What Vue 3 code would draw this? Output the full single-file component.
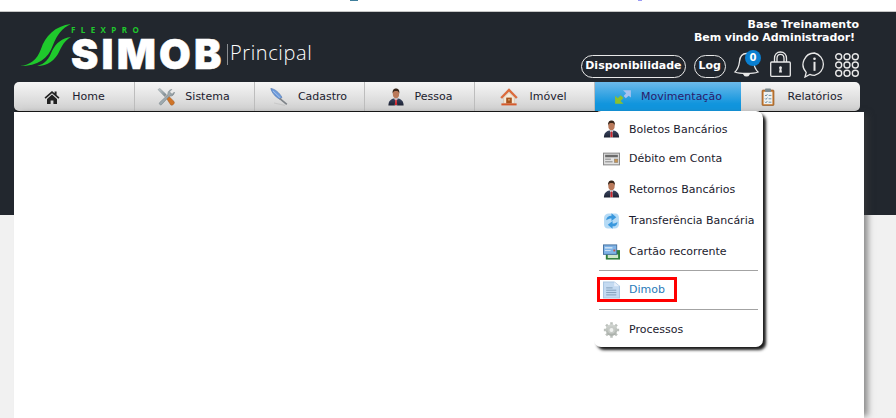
<script setup>
const navItems = [
  { label: 'Home', icon: 'home', width: 121, iconGap: 11, pad: 0 },
  { label: 'Sistema', icon: 'tools', width: 120, iconGap: 10, pad: 2 },
  { label: 'Cadastro', icon: 'quill', width: 110, iconGap: 10, pad: 2 },
  { label: 'Pessoa', icon: 'man', width: 110, iconGap: 10, pad: 0 },
  { label: 'Imóvel', icon: 'house', width: 120, iconGap: 11, pad: 2 },
  { label: 'Movimentação', icon: 'move', width: 146, iconGap: 9, pad: 0 },
  { label: 'Relatórios', icon: 'clip', width: 119, iconGap: 11, pad: 0 }
].map((item) => ({ ...item, active: item.label === 'Movimentação' }))
const menu = [
  { label: 'Boletos Bancários', icon: 'man', h: 30 },
  { label: 'Débito em Conta', icon: 'debit', h: 29 },
  { label: 'Retornos Bancários', icon: 'man', h: 32 },
  { label: 'Transferência Bancária', icon: 'transfer', h: 31 },
  { label: 'Cartão recorrente', icon: 'card', h: 31 },
  { sep: true },
  { label: 'Dimob', icon: 'doc', h: 25, marked: true },
  { sep: true },
  { label: 'Processos', icon: 'gear', h: 31 }
]
</script>

<template>
  <div class="page">
    <svg class="defs" width="0" height="0" aria-hidden="true">
      <defs>
        <linearGradient id="g-steel" x1="0" y1="0" x2="1" y2="1">
          <stop offset="0" stop-color="#c4ced2"/><stop offset="1" stop-color="#77848a"/>
        </linearGradient>
        <linearGradient id="g-suit" x1="0" y1="0" x2="0" y2="1">
          <stop offset="0" stop-color="#3a4560"/><stop offset="1" stop-color="#1d2233"/>
        </linearGradient>
        <linearGradient id="g-gear" x1="0" y1="0" x2="0" y2="1">
          <stop offset="0" stop-color="#d4d8d4"/><stop offset="1" stop-color="#a6aca6"/>
        </linearGradient>
        <symbol id="i-home" viewBox="-1 -1 18 18">
          <path d="M8 2 0.5 8.6 1.6 9.8 8 4.2 14.4 9.8 15.5 8.6 12.6 6V2.6H10.6V4.2Z" fill="#222"/>
          <path d="M3 10 8 5.6 13 10V15H9.4V11.4H6.6V15H3Z" fill="#222"/>
        </symbol>
        <symbol id="i-tools" viewBox="0 0 18 18">
          <path d="M1 1.6 2.8.4 9.4 6.6 7.6 8.6Z" fill="url(#g-steel)" stroke="#6f7b80" stroke-width=".4"/>
          <path d="M8.6 9 10.6 7 17 13.4C17.8 14.4 17.2 15.6 16.4 16.4 15.6 17.2 14.4 17.6 13.6 16.8Z" fill="#cf7428" stroke="#8a4a18" stroke-width=".4"/>
          <path d="M2.6 14.6 11 6.6C10.6 4.6 11.4 2 14.8 1.4L12.8 3.6 13.6 5.6 15.6 6 17.4 4C17.4 6.6 15.4 8.6 12.6 8L4.6 16.6C3.4 17.6 1.6 16 2.6 14.6Z" fill="url(#g-steel)" stroke="#6f7b80" stroke-width=".5"/>
        </symbol>
        <symbol id="i-quill" viewBox="0 0 18 18">
          <path d="M.8.4C5 1 9.4 4.6 12 9.4L9.8 11.2C5.6 9 1.8 5 .8.4Z" fill="#6d9bdc" stroke="#44699f" stroke-width=".5"/>
          <path d="M3 3 10.4 10" stroke="#c9d9ee" stroke-width=".6" fill="none"/>
          <path d="M9.6 10.4 16.8 16.4" stroke="#7e8388" stroke-width="1.7" fill="none"/>
          <path d="M4 15 15 17.4" stroke="#c9c9c9" stroke-width="1.1" fill="none"/>
        </symbol>
        <symbol id="i-man" viewBox="0 0 16 18">
          <path d="M.4 17.6C.4 13 2.6 11.2 5.8 10.4H10.2C13.4 11.2 15.6 13 15.6 17.6Z" fill="url(#g-suit)"/>
          <path d="M6.2 10.4H9.8L8.8 12.6 9.2 17.6H6.8L7.2 12.6Z" fill="#f4f4f4"/>
          <path d="M7.3 11.4H8.7L9 16.2 8 17.6 7 16.2Z" fill="#d1242c"/>
          <ellipse cx="8" cy="5.6" rx="3.2" ry="4.7" fill="#b9795a"/>
          <path d="M4.7 5.4C4.2 1.8 6.2.6 8 .6 9.8.6 11.8 1.8 11.3 5.4 10.8 3.6 9.8 3 8 3 6.2 3 5.2 3.6 4.7 5.4Z" fill="#38261a"/>
        </symbol>
        <symbol id="i-house" viewBox="0 0 18 18">
          <path d="M9 .6.6 9.2 2 10.6 9 3.4 16 10.6 17.4 9.2Z" fill="#e06a38" stroke="#b94c20" stroke-width=".3"/>
          <path d="M3.6 9.8 9 4.4 14.4 9.8V15.4H3.6Z" fill="#f6ead8" stroke="#cdb79c" stroke-width=".5"/>
          <rect x="6.2" y="9.6" width="5.6" height="5.8" fill="#a6531d"/>
          <rect x="8.4" y="11" width="1.2" height="1.6" fill="#e9b984"/>
          <rect x="1.4" y="15.4" width="15.2" height="2" fill="#d65a2c"/>
        </symbol>
        <symbol id="i-move" viewBox="0 0 16 14">
          <path d="M8 1H15V7.5L13 5.8 10.5 8 8.6 6 10.8 3.6Z" fill="#a8c2f0"/>
          <path d="M8.5 13H1V5.8L3.4 8 6 5.4 8.4 7.8 5.8 10.5Z" fill="#8cc02e"/>
        </symbol>
        <symbol id="i-clip" viewBox="0 0 14 18">
          <rect x="1" y="2" width="12" height="15.5" rx="1" fill="#c67b32" stroke="#8c5320" stroke-width=".6"/>
          <rect x="2.6" y="3.8" width="8.8" height="12.4" fill="#eef1f1"/>
          <rect x="4" y=".6" width="6" height="3.4" rx=".8" fill="#7d8a8e"/>
          <path d="M4 7 5 8 6.4 6.2M4 10.4 5 11.4 6.4 9.6M4 13.8 5 14.8 6.4 13M7.6 7.4H10.4M7.6 10.8H10.4M7.6 14.2H10.4" stroke="#4d7a94" stroke-width=".8" fill="none"/>
        </symbol>
        <symbol id="i-debit" viewBox="0 0 16 16">
          <rect x=".5" y="2.5" width="15" height="11" fill="#e2e2e2" stroke="#8a8a8a"/>
          <rect x="2" y="4" width="12" height="2.4" fill="#6b6b6b"/>
          <rect x="2" y="7.6" width="5.4" height="1.2" fill="#999"/>
          <rect x="2" y="10" width="7" height="1.2" fill="#999"/>
          <rect x="10.6" y="8" width="3.4" height="3.4" fill="#c49456" stroke="#7a7a7a" stroke-width=".4"/>
        </symbol>
        <symbol id="i-transfer" viewBox="0 0 16 16">
          <path d="M1 5C1 2.5 3 1 5.5 1H11.5C14 1 15 3 15 5V11C15 13.5 13.5 15 11 15H4.5C2.5 15 1 13.5 1 11.5Z" fill="#b5daf5"/>
          <path d="M3 7.4C3 4.5 5 3 8 3V.8L12.5 4.4 8 8V5.6C6.2 5.6 4.8 6 3 7.4Z" fill="#3a98dd"/>
          <path d="M13.6 8.6C13.6 11.5 12 13 9 13V15.2L4.5 11.6 9 8V10.4C10.8 10.4 12 10 13.6 8.6Z" fill="#3a98dd"/>
        </symbol>
        <symbol id="i-card" viewBox="0 0 18 16">
          <rect x="3" y="6" width="15" height="10" fill="#2f7d3a"/>
          <rect x="5" y="10.6" width="11" height="3.8" fill="#cfe6c8"/>
          <rect x=".5" y=".5" width="14" height="10" fill="#7fb3e6" stroke="#46709e"/>
          <rect x="2" y="3" width="8" height="1.2" fill="#e8f2fb"/>
          <rect x="2" y="6" width="6" height="1" fill="#d6e6f6"/>
          <rect x="11" y="5.4" width="2" height="2" fill="#c2544a"/>
        </symbol>
        <symbol id="i-doc" viewBox="0 0 16 16">
          <path d="M.5.5H10.5L15.5 4.5V15.5H.5Z" fill="#c4daf1" stroke="#a9c5e2"/>
          <path d="M10.5.5V4.5H15.5Z" fill="#e7f0fa"/>
          <path d="M3 6H9M3 8.2H12.5M3 10.4H12.5M3 12.6H12.5" stroke="#7f9cb9" stroke-width=".9"/>
        </symbol>
        <symbol id="i-gear" viewBox="0 0 16 16">
          <path d="M8 .8V15.2M.8 8H15.2M2.9 2.9 13.1 13.1M13.1 2.9 2.9 13.1" stroke="#bcc1bc" stroke-width="2.4"/>
          <circle cx="8" cy="8" r="5.5" fill="url(#g-gear)"/>
          <circle cx="8" cy="8" r="3.4" fill="#c6cac6"/>
          <circle cx="8" cy="8" r="1.8" fill="#f0f2f0"/>
        </symbol>
      </defs>
    </svg>

    <div class="topstrip">
      <span class="frag frag-a"></span>
      <span class="frag frag-b"></span>
    </div>

    <header class="band">
      <div class="head">
        <div class="brand">
          <svg class="swoosh" width="52" height="43" viewBox="0 0 52 43">
            <path d="M0 42C10 41 17 36 21 25 25 12 35 2 51 0 42 4 37 11 33 21 28 35 18 42 0 42Z" fill="#1fc92c"/>
            <path d="M17 42C25 40 29 35 32 27 36 19 42 14 51 13 44 17 42 22 39 28 35 36 28 42 17 42Z" fill="#1fc92c"/>
          </svg>
          <div class="wordmark">
            <div class="flexpro">FLEXPRO</div>
            <div class="simob">SIMOB</div>
          </div>
          <div class="divider"></div>
          <div class="module">Principal</div>
        </div>
        <div class="tools">
          <div class="greet">
            <div>Base Treinamento</div>
            <div class="welcome">Bem vindo Administrador!</div>
          </div>
          <div class="actions">
            <span class="pill pill-wide">Disponibilidade</span>
            <span class="pill">Log</span>
            <span class="bell">
              <svg width="27" height="27" viewBox="0 0 27 27" fill="none" stroke="#e8e8e8" stroke-width="1.3">
                <path d="M2 22C5 19 6 16 6.5 11.5 7 6 10 3.5 13.5 3.5 17 3.5 20 6 20.5 11.5 21 16 22 19 25 22 20 24 7 24 2 22Z"/>
                <path d="M11 24.4C12 26.4 15 26.4 16 24.4Z" fill="#e8e8e8"/>
              </svg>
              <span class="badge">0</span>
            </span>
            <svg class="lock" width="21" height="26" viewBox="0 0 21 26" fill="none" stroke="#e8e8e8" stroke-width="1.3">
              <path d="M4.5 11V7.5C4.5 3.5 7 1 10.5 1 14 1 16.5 3.5 16.5 7.5V11M7 11V7.5C7 5 8.5 3.4 10.5 3.4 12.5 3.4 14 5 14 7.5V11"/>
              <rect x=".7" y="11" width="19.6" height="14.3" rx="1"/>
              <path d="M10.5 15.2A1.6 1.6 0 0 1 11.4 18L12 21.5H9L9.6 18A1.6 1.6 0 0 1 10.5 15.2Z" fill="#e8e8e8" stroke="none"/>
            </svg>
            <svg class="info" width="25" height="26" viewBox="0 0 25 26" fill="none" stroke="#e8e8e8" stroke-width="1.3">
              <path d="M12.5 1A11.5 11.5 0 0 1 12.5 23.4C10.5 23.4 9 23 7.8 22.4L3 25 4.2 20.4A11.5 11.5 0 0 1 12.5 1Z"/>
              <circle cx="12.5" cy="6.8" r="1.3" fill="#e8e8e8" stroke="none"/>
              <rect x="11.5" y="9.8" width="2" height="9" fill="#e8e8e8" stroke="none"/>
            </svg>
            <svg class="grid" width="24" height="24" viewBox="0 0 24 24" fill="none" stroke="#e8e8e8" stroke-width="1.4">
              <circle cx="3.7" cy="3.7" r="3"/><circle cx="12" cy="3.7" r="3"/><circle cx="20.3" cy="3.7" r="3"/>
              <circle cx="3.7" cy="12" r="3"/><circle cx="12" cy="12" r="3"/><circle cx="20.3" cy="12" r="3"/>
              <circle cx="3.7" cy="20.3" r="3"/><circle cx="12" cy="20.3" r="3"/><circle cx="20.3" cy="20.3" r="3"/>
            </svg>
          </div>
        </div>
      </div>
      <nav class="nav">
        <a
          v-for="item in navItems"
          :key="item.label"
          class="nav-item"
          :class="{ active: item.active }"
          :style="{ width: item.width + 'px', gap: item.iconGap + 'px', paddingRight: item.pad + 'px' }"
        >
          <svg class="nav-icon" width="18" height="18"><use :href="'#i-' + item.icon" /></svg>
          <span>{{ item.label }}</span>
        </a>
        <div class="dropdown">
          <template v-for="(entry, i) in menu" :key="i">
            <div v-if="entry.sep" class="sep"></div>
            <div
              v-else
              class="entry"
              :class="{ marked: entry.marked }"
              :style="{ height: entry.h + 'px' }"
            >
              <svg width="17" height="18"><use :href="'#i-' + entry.icon" /></svg>
              <span>{{ entry.label }}</span>
            </div>
          </template>
        </div>
      </nav>
    </header>

    <main class="panel"></main>
  </div>
</template>

<style>
html, body {
  margin: 0;
  background: #f1f1f1;
}
</style>

<style scoped>
.page {
  position: relative;
  height: 418px;
  overflow: hidden;
  background: #f1f1f1;
  font-family: "DejaVu Sans", Verdana, sans-serif;
  font-size: 11px;
  color: #1b1b2e;
}
.defs {
  position: absolute;
}
.topstrip {
  height: 11px;
  background: #fff;
  border-bottom: 1px solid #c6c6c6;
  display: flex;
  align-items: flex-start;
}
.frag {
  height: 1px;
  display: block;
}
.frag-a {
  width: 8px;
  margin-left: 350px;
  background: #3f7f9c;
}
.frag-b {
  width: 4px;
  margin-left: 280px;
  background: #9a9af5;
}
.band {
  background: #22272e;
  height: 203px;
  padding: 0 37px 0 14px;
  box-sizing: border-box;
  display: flex;
  flex-direction: column;
}
.head {
  height: 70px;
  display: flex;
  justify-content: space-between;
}
.brand {
  display: flex;
  align-items: flex-start;
  padding: 12px 0 0 6px;
}
.swoosh {
  margin-right: -1px;
  flex: none;
}
.wordmark {
  width: 152px;
  display: flex;
  flex-direction: column;
}
.flexpro {
  height: 12px;
  font: 700 8px/11px "Open Sans", sans-serif;
  letter-spacing: 5.4px;
  color: #1fc92c;
  white-space: nowrap;
}
.simob {
  font: 900 41px/36px Inter, sans-serif;
  letter-spacing: 3.2px;
  color: #fff;
  -webkit-text-stroke: .5px #fff;
}
.divider {
  width: 1px;
  height: 21px;
  margin: 20px 2px 0 4px;
  background: #8a8d91;
}
.module {
  margin-top: 16px;
  font: 300 20px/26px "Open Sans", sans-serif;
  letter-spacing: .6px;
  color: #fff;
}
.tools {
  display: flex;
  flex-direction: column;
  align-items: flex-end;
  padding-top: 6px;
}
.greet {
  font-weight: 700;
  line-height: 13px;
  text-align: right;
  color: #fff;
}
.welcome {
  margin-right: 4px;
  letter-spacing: -.08px;
}
.actions {
  display: flex;
  align-items: flex-start;
  margin-top: 6px;
}
.pill {
  height: 23px;
  box-sizing: border-box;
  margin-top: 5px;
  padding: 0 4px;
  border: 1.5px solid #e8e8e8;
  border-radius: 12px;
  font-weight: 700;
  line-height: 20px;
  color: #fff;
  margin-right: 7px;
}
.pill-wide {
  padding: 0 3px;
  margin-right: 8px;
}
.bell {
  position: relative;
  width: 27px;
  height: 27px;
  margin-right: 10px;
}
.badge {
  position: absolute;
  left: 12px;
  top: 0;
  width: 16px;
  height: 16px;
  border-radius: 50%;
  background: #0a7fd0;
  color: #fff;
  font-size: 10px;
  font-weight: 700;
  line-height: 16px;
  text-align: center;
}
.lock {
  margin: 1px 11px 0 0;
}
.info {
  margin: 2px 8px 0 0;
}
.grid {
  margin-top: 3px;
}
.nav {
  position: relative;
  display: flex;
  height: 29px;
  width: 846px;
  border-radius: 5px;
  background: linear-gradient(#f6f6f6, #cfcfcf);
  box-shadow: 0 1px 0 #111;
}
.nav-item {
  box-sizing: border-box;
  display: flex;
  align-items: center;
  justify-content: center;
  border-right: 1px solid #bdbdbd;
  color: #1b1b2e;
}
.nav-item:nth-last-child(3),
.nav-item:nth-last-child(2) {
  border-right: 0;
}
.nav-item.active {
  background: linear-gradient(#6cbaeb, #1195dd 75%);
  color: #2b1a6b;
}
.nav-icon {
  flex: none;
}
.dropdown {
  position: absolute;
  left: 580px;
  top: 29px;
  width: 169px;
  height: 236px;
  box-sizing: border-box;
  padding: 3px 5px 0 5px;
  background: #fff;
  border-radius: 7px;
  box-shadow: 3px 3px 3px #1a1a1a;
  z-index: 3;
}
.entry {
  display: flex;
  align-items: center;
  gap: 9px;
  padding-left: 4px;
  color: #1b1b2e;
  white-space: nowrap;
}
.entry svg {
  flex: none;
}
.entry.marked {
  box-sizing: border-box;
  width: 80px;
  margin-left: -2px;
  padding-left: 3px;
  border: 3px solid #f00;
  color: #2a7ab8;
}
.sep {
  height: 1px;
  background: #a3a3a3;
  margin: 3px 0 6px;
}
.entry.marked + .sep {
  margin: 7px 0 4px;
}
.panel {
  position: relative;
  width: 850px;
  height: 306px;
  margin: -103px 0 0 14px;
  background: #fff;
  box-shadow: 6px 0 6px -2px rgba(60, 60, 60, .55);
}
</style>
